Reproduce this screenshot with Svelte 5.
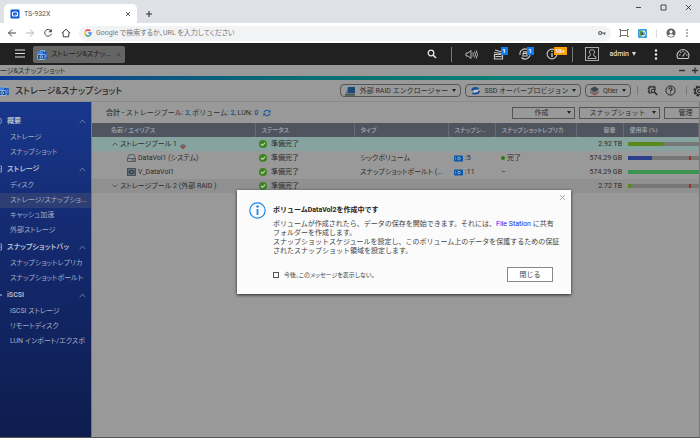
<script>
  const menu = [
    { title: '概要', items: ['ストレージ', 'スナップショット'] },
    { title: 'ストレージ', items: ['ディスク', 'ストレージ/スナップショ...', 'キャッシュ加速', '外部ストレージ'] },
    { title: 'スナップショットバッ', items: ['スナップショットレプリカ', 'スナップショットボールト'] },
    { title: 'iSCSI', items: ['iSCSI ストレージ', 'リモートディスク', 'LUN インポート/エクスポ'] }
  ];
  const selected = 'ストレージ/スナップショ...';
  const rows = [
    { kind: 'pool', open: true, name: 'ストレージプール 1', type: '', snap: '', replica: '', size: '2.92 TB', used: 50, color: '#588a1b', mark: false },
    { kind: 'disk', name: 'DataVol1 (システム)', type: 'シックボリューム', snap: ':5', replica: '完了', size: '574.29 GB', used: 34, color: '#2c3f8c', mark: true },
    { kind: 'vault', name: 'V_DataVol1', type: 'スナップショットボールト (...', snap: ':11', replica: '–', size: '574.29 GB', used: 100, color: '#3c9450', mark: false },
    { kind: 'pool', open: false, name: 'ストレージプール 2 (外部 RAID )', type: '', snap: '', replica: '', size: '2.72 TB', used: 4, color: '#588a1b', mark: true }
  ];
</script>

{#snippet storage()}
  <svg width="11" height="11" viewBox="0 0 11 11" aria-hidden="true">
    <path d="M3.500 4V1.500h4V4" fill="none" stroke="#7fa8e0" />
    <rect x="4" y="3" width="7" height="7" rx="1" fill="#2457b8" />
    <path d="M8.500 5h2M8.500 7h2" stroke="#8fb4ee" stroke-width=".7" />
    <rect x="0" y="2.500" width="6" height="3.500" fill="#3f86e4" />
    <rect x=".5" y="5.500" width="7.500" height="5" rx="1" fill="#164b8f" stroke="#a9c6ec" stroke-width=".8" />
    <circle cx="4.300" cy="8" r="1.300" fill="none" stroke="#c5daf4" stroke-width=".8" />
  </svg>
{/snippet}

<div class="page">
  <header class="tabs">
    <div class="tab">
      <svg width="10" height="10" viewBox="0 0 10 10" aria-hidden="true"><rect x=".5" y=".5" width="9" height="9" rx="1.2" fill="#0a5bd8" /><rect x="2.5" y="3" width="5" height="4" rx="1" fill="none" stroke="#fff" stroke-width="1.2" /><path d="M5.5 5.5l1.5 1.7" stroke="#fff" /></svg>
      <span>TS-932X</span>
      <button class="bare" aria-label="タブを閉じる"><svg width="6" height="6" viewBox="0 0 6 6"><path d="M1 1l4 4M5 1L1 5" stroke="#444" stroke-width=".9" /></svg></button>
    </div>
    <button class="bare plus" aria-label="新しいタブ"><svg width="8" height="8" viewBox="0 0 8 8"><path d="M4 1v6M1 4h6" stroke="#333" stroke-width="1.1" /></svg></button>
    <div class="winbtns">
      <button class="bare" aria-label="最小化"><svg width="7" height="7" viewBox="0 0 7 7"><path d="M1 3.5h5" stroke="#222" stroke-width=".8" /></svg></button>
      <button class="bare" aria-label="最大化"><svg width="7" height="7" viewBox="0 0 7 7"><path d="M1 1h5v5H1z" fill="none" stroke="#222" stroke-width=".8" /></svg></button>
      <button class="bare" aria-label="閉じる"><svg width="7" height="7" viewBox="0 0 7 7"><path d="M1 1l5 5M6 1L1 6" stroke="#222" stroke-width=".8" /></svg></button>
    </div>
  </header>

  <div class="toolbar">
    <button class="bare" aria-label="戻る"><svg width="10" height="10" viewBox="0 0 10 10"><path d="M9 5H1.5M5 1.5L1.5 5 5 8.5" fill="none" stroke="#444" /></svg></button>
    <button class="bare" aria-label="進む"><svg width="10" height="10" viewBox="0 0 10 10"><path d="M1 5h7.5M5 1.5L8.500 5 5 8.500" fill="none" stroke="#b4b6b8" /></svg></button>
    <button class="bare" aria-label="再読み込み"><svg width="10" height="10" viewBox="0 0 10 10"><path d="M8 3A3.400 3.400 0 1 0 8.400 5.800" fill="none" stroke="#444" /><path d="M8.800.8v3.400H5.400z" fill="#444" /></svg></button>
    <button class="bare" aria-label="ホーム"><svg width="10" height="10" viewBox="0 0 10 10"><path d="M.8 5.200L5 1.200l4.200 4M2.200 4.500V8.800h5.600V4.500" fill="none" stroke="#444" /></svg></button>
    <label class="omni">
      <svg width="8" height="8" viewBox="0 0 8 8" aria-hidden="true"><g fill="none" stroke-width="1.400"><path d="M6.200 2A3 3 0 0 0 1.400 2.500" stroke="#ea4335" /><path d="M1.400 2.500a3 3 0 0 0 0 3" stroke="#fbbc05" /><path d="M1.400 5.500A3 3 0 0 0 6 6.300" stroke="#34a853" /><path d="M6 6.300A3 3 0 0 0 7 4H4.200" stroke="#4285f4" /></g></svg>
      <input type="text" aria-label="アドレス" placeholder="Google で検索するか、URL を入力してください" />
      <svg width="8" height="6" viewBox="0 0 8 6" aria-hidden="true"><circle cx="2.200" cy="3" r="1.500" fill="none" stroke="#555" stroke-width="1.100" /><path d="M3.700 3h4M6.500 3v1.700" stroke="#555" stroke-width="1.200" /></svg>
    </label>
    <div class="ext">
      <svg width="10" height="8" viewBox="0 0 10 8" aria-hidden="true"><rect x="1.500" y="1.500" width="7" height="5" fill="none" stroke="#555" stroke-width=".8" /><path d="M0 .5h2M8 .5h2M0 7.500h2M8 7.500h2" stroke="#4a9c4a" /></svg>
      <svg width="9" height="9" viewBox="0 0 9 9" aria-hidden="true"><rect width="9" height="9" rx="1" fill="#3aa0e0" /><circle cx="4.500" cy="4.500" r="3.200" fill="#d9e8d0" /><path d="M4.500 1.300A3.200 3.200 0 0 0 3.500 7.500l1-3z" fill="#4c9d3c" /><circle cx="5" cy="4.500" r="1.600" fill="#244f80" /><circle cx="5.500" cy="4" r=".6" fill="#fff" /></svg>
      <i></i>
      <svg width="10" height="10" viewBox="0 0 10 10" aria-hidden="true"><circle cx="5" cy="5" r="4.500" fill="#5f6368" /><circle cx="5" cy="3.800" r="1.600" fill="#fff" /><path d="M2 7.500c1-1.800 5-1.800 6 0-1.600 1.600-4.400 1.600-6 0z" fill="#fff" /></svg>
      <svg width="4" height="10" viewBox="0 0 4 10" aria-hidden="true"><g fill="#555"><circle cx="2" cy="2" r=".8" /><circle cx="2" cy="5" r=".8" /><circle cx="2" cy="8" r=".8" /></g></svg>
    </div>
  </div>

  <nav class="desk" aria-label="デスクトップ">
    <button class="bare burger" aria-label="メニュー"><svg width="10" height="9" viewBox="0 0 10 9"><path d="M0 1h10M0 4.500h10M0 8h10" stroke="#ddd" stroke-width="1.200" /></svg></button>
    <div class="task">{@render storage()}<span>ストレージ&amp;スナッ...</span>
      <svg width="5" height="5" viewBox="0 0 5 5" aria-hidden="true"><path d="M.7.700l3.600 3.600M4.300.7L.7 4.300" stroke="#244a70" stroke-width=".9" /></svg>
    </div>
    <div class="tray">
      <button class="bare search" aria-label="検索"><svg width="10" height="10" viewBox="0 0 10 10"><circle cx="4" cy="4" r="2.800" fill="none" stroke="#e4e4e4" stroke-width="1.300" /><path d="M6 6l3 3" stroke="#e4e4e4" stroke-width="1.600" /></svg></button>
      <i></i>
      <button class="bare" aria-label="音量"><svg width="13" height="11" viewBox="0 0 13 11"><path d="M1 4h2l3-2.500v8L3 7H1zM7.700 3.500q1.300 2 0 4M9.500 2.500q2 3 0 6M11.200 1.500q2.600 4 0 8" fill="none" stroke="#c8c8c8" stroke-width=".9" /></svg></button>
      <button class="bare note" aria-label="バックグラウンドタスク 1"><svg width="11" height="12" viewBox="0 0 11 12"><path d="M1.500 11V6.500h8V11zM1 4.500l7 1M2 2l7 2M2.500 8.500h6" fill="none" stroke="#c8c8c8" stroke-width="1.200" /></svg><b>1</b></button>
      <button class="bare note" aria-label="外部デバイス 1"><svg width="12" height="12" viewBox="0 0 12 12"><path d="M1 7A5 5 0 0 1 9.500 2.500M11 5A5 5 0 0 1 2.500 9.500M4 5.500h4V8H4zM4.700 5.500V3.800h2.600v1.700" fill="none" stroke="#c8c8c8" stroke-width="1.100" /></svg><b>1</b></button>
      <button class="bare note wide" aria-label="通知 10+"><svg width="12" height="12" viewBox="0 0 12 12"><circle cx="6" cy="6" r="4.900" fill="none" stroke="#c8c8c8" stroke-width="1.100" /><path d="M6 5v4M6 2.700v1.300" stroke="#ddd" stroke-width="1.200" /></svg><b>10+</b></button>
      <i></i>
      <svg class="avatar" width="14" height="14" viewBox="0 0 14 14" aria-hidden="true"><rect x=".5" y=".5" width="13" height="13" fill="none" stroke="#aaa" /><path d="M3 11.500V10l2.500-1.500V7.500Q4.500 6.500 4.500 5 4.500 2.500 7 2.500T9.500 5Q9.500 6.500 8.500 7.500v1L11 10v1.500z" fill="none" stroke="#bbb" stroke-width=".9" /></svg>
      <button class="bare admin">admin <svg width="4" height="4" viewBox="0 0 4 4"><path d="M0 0h4L2 4z" fill="#ddd" /></svg></button>
      <button class="bare dots" aria-label="その他"><svg width="4" height="11" viewBox="0 0 4 11"><g fill="#eee"><circle cx="2" cy="1.500" r="1.200" /><circle cx="2" cy="5.500" r="1.200" /><circle cx="2" cy="9.500" r="1.200" /></g></svg></button>
      <button class="bare" aria-label="ダッシュボード"><svg width="14" height="12" viewBox="0 0 14 12"><path d="M2 10.500a5.800 5.800 0 1 1 10 0zM6.500 8.500L9.500 4.500M3 7h1.500M4.200 3.800l1 1M7 2.500V4M10 7h1.500M4.500 10.500h5" fill="none" stroke="#c8c8c8" stroke-width="1.100" /></svg></button>
    </div>
  </nav>

  <div class="wintitle"><span>ストレージ&amp;スナップショット</span>
    <svg width="22" height="7" viewBox="0 0 22 7" aria-hidden="true"><path d="M1 3.500h6M14 3.500h6M17 .5v6" stroke="#333" stroke-width="1.300" /></svg>
  </div>
  <div class="stripe"></div>

  <div class="apphead">
    {@render storage()}
    <h1>ストレージ&amp;スナップショット</h1>
    <button class="pill raid"><svg width="11" height="10" viewBox="0 0 11 10"><path d="M3 1h7v6H2z" fill="#174a78" /><path d="M2 4L0 9h10V7H3z" fill="#6d757d" /><path d="M0 9h10" stroke="#1f3a2a" /></svg><span>外部 RAID エンクロージャー</span><em></em></button>
    <button class="pill ssd"><svg width="11" height="10" viewBox="0 0 11 10"><path d="M1 4q2-5 8-2L8 4Q4 3 3 5zM10 5Q9 10 2 8l1-2q4 1.500 5-1z" fill="#14519b" /><path d="M3 4.500l5-1v2L4 7z" fill="#c4c8cc" /></svg><span>SSD オーバープロビジョン</span><em></em></button>
    <button class="pill qtier"><svg width="9" height="10" viewBox="0 0 9 10"><path d="M0 6.500L4.500 4 9 6.500 4.500 9.500z" fill="#a5301f" /><path d="M0 4.500L4.500 2 9 4.500v1.500L4.500 8.500 0 6z" fill="#74777b" /><path d="M0 3L4.500.5 9 3 4.500 6z" fill="#3e444b" /></svg><span>Qtier</span><em></em></button>
    <i></i>
    <button class="bare t1" aria-label="診断"><svg width="11" height="11" viewBox="0 0 11 11"><path d="M8 5.500V2H2v6h3M2 3.500H.8M2 6.500H.8M3.500 2V.8M6.500 2V.8" fill="none" stroke="#222" stroke-width="1.100" /><circle cx="6" cy="5.800" r="1.700" fill="none" stroke="#222" /><path d="M7.200 7l3 3" stroke="#222" stroke-width="1.500" /></svg></button>
    <button class="bare t2" aria-label="ヘルプ"><svg width="11" height="11" viewBox="0 0 11 11"><circle cx="5.500" cy="5.500" r="4.600" fill="none" stroke="#222" /><path d="M4 4.300Q4 2.800 5.500 2.800T7 4.300Q7 5 5.500 5.800v.7M5.500 7.500v1.100" fill="none" stroke="#222" stroke-width="1.100" /></svg></button>
    <i class="second"></i>
    <button class="bare gear" aria-label="設定"><svg width="12" height="12" viewBox="0 0 12 12"><circle cx="6" cy="6" r="4.600" fill="none" stroke="#222" stroke-width="1.800" stroke-dasharray="2.400 1.200" /><circle cx="6" cy="6" r="3.600" fill="#999" stroke="#222" /><circle cx="6" cy="6" r="1.500" fill="none" stroke="#222" /></svg></button>
  </div>

  <div class="body">
    <aside>
      {#each menu as group, g}
        <section>
          <h2>
            <svg class="gicon" width="8" height="8" viewBox="0 0 8 8" aria-hidden="true">
              {#if g === 0}<circle cx="4" cy="4" r="3.500" fill="none" stroke="#8795b5" />{:else if g === 3}<path d="M2 4h6" stroke="#8795b5" stroke-width="1.500" />{:else}<path d="M1 1h6.500v6H1zM4 4h3" fill="none" stroke="#8795b5" />{/if}
            </svg>
            <span>{group.title}</span>
            <svg width="7" height="5" viewBox="0 0 7 5" aria-hidden="true"><path d="M.7 4.200L3.500 1l2.800 3.200" fill="none" stroke="#7c8cb6" stroke-width=".8" /></svg>
          </h2>
          {#each group.items as item}
            <a href="#top" class:sel={item === selected}>{item}</a>
          {/each}
        </section>
      {/each}
    </aside>

    <main>
      <div class="summary">
        <p><strong>合計 -</strong> ストレージプール: <b>2</b>, ボリューム: <b>2</b>, LUN: <b>0</b></p>
        <button class="bare" aria-label="更新"><svg width="8" height="8" viewBox="0 0 8 8"><path d="M1 3.500Q1.500 1.300 4 1.300q1.500 0 2.500 1.200M7 4.500Q6.500 6.700 4 6.700q-1.500 0-2.500-1.200" fill="none" stroke="#155a9e" stroke-width="1.100" /><path d="M7.600.7v2.800H4.800zM.4 7.300V4.500h2.800z" fill="#155a9e" /></svg></button>
        <div class="actions">
          <button class="act make"><span>作成</span><em></em></button>
          <button class="act snapb"><span>スナップショット</span><em></em></button>
          <button class="act manage"><span>管理</span></button>
        </div>
      </div>
      <table>
        <colgroup><col class="c1" /><col class="c2" /><col class="c3" /><col class="c4" /><col class="c5" /><col class="c6" /><col /></colgroup>
        <thead>
          <tr><th class="first">名前 / エイリアス</th><th>ステータス</th><th>タイプ</th><th>スナップシ...</th><th>スナップショットレプリカ</th><th class="num">容量</th><th>使用率 (%)</th></tr>
        </thead>
        <tbody>
          {#each rows as r}
            <tr class:open={r.open} class:shut={r.kind === 'pool' && !r.open}>
              <td>
                <div class="name {r.kind}">
                  {#if r.kind === 'pool'}
                    <svg width="6" height="4" viewBox="0 0 6 4" aria-hidden="true"><path d={r.open ? 'M.5 3.500L3 1l2.500 2.500' : 'M.5.500L3 3 5.500.500'} fill="none" stroke="#444" stroke-width=".8" /></svg>
                  {:else if r.kind === 'disk'}
                    <svg width="9" height="8" viewBox="0 0 9 8" aria-hidden="true"><path d="M.5 4.500L2 .7h5l1.500 3.800v3h-8zM.5 4.500h8" fill="none" stroke="#444c55" stroke-width=".8" /><path d="M4.500 6h3" stroke="#444c55" /></svg>
                  {:else}
                    <svg width="9" height="8" viewBox="0 0 9 8" aria-hidden="true"><rect x=".5" y=".5" width="8" height="7" fill="#6d7781" stroke="#39424c" stroke-width=".8" /><circle cx="4.500" cy="4" r="1.800" fill="none" stroke="#222b38" /><path d="M2 2v4M7 2v4" stroke="#2c3643" stroke-width=".7" /></svg>
                  {/if}
                  <span>{r.name}</span>
                  {#if r.open}<svg class="tier" width="6" height="6" viewBox="0 0 6 6" aria-hidden="true"><path d="M0 3.500L3 2l3 1.500L3 6z" fill="#a5301f" /><path d="M0 2.500L3 .7l3 1.800L3 4.500z" fill="#6c7075" /></svg>{/if}
                </div>
              </td>
              <td><div class="cell status"><svg width="8" height="8" viewBox="0 0 8 8" aria-hidden="true"><circle cx="4" cy="4" r="4" fill="#3c8420" /><path d="M2 4l1.500 1.500L6.200 2.700" fill="none" stroke="#c5d2bd" stroke-width="1.100" /></svg><span>準備完了</span></div></td>
              <td>{r.type}</td>
              <td>{#if r.snap}<div class="cell snap"><svg width="9" height="7" viewBox="0 0 9 7" aria-hidden="true"><rect y=".5" width="9" height="6" rx=".8" fill="#0c58a8" /><circle cx="5" cy="3.500" r="1.300" fill="none" stroke="#a9bed4" stroke-width=".8" /><path d="M1.500 2v3" stroke="#7f9fc4" stroke-width=".6" /></svg><span>{r.snap}</span></div>{/if}</td>
              <td>{#if r.replica === '完了'}<span class="ok"></span>{/if}{r.replica}</td>
              <td class="num">{r.size}</td>
              <td><div class="bar"><div style:width="{r.used}%" style:background={r.color}></div>{#if r.mark}<s></s>{/if}</div></td>
            </tr>
          {/each}
        </tbody>
      </table>
    </main>
  </div>

  <div class="dialog" role="dialog" aria-labelledby="dlg-title">
    <button class="bare close" aria-label="閉じる"><svg width="7" height="7" viewBox="0 0 7 7"><path d="M1 1l5 5M6 1L1 6" stroke="#999" stroke-width=".8" /></svg></button>
    <svg class="info" width="17" height="17" viewBox="0 0 17 17" aria-hidden="true"><circle cx="8.500" cy="8.500" r="7.700" fill="none" stroke="#1688e8" stroke-width="1.200" /><path d="M8.500 7v6" stroke="#1688e8" stroke-width="1.800" /><circle cx="8.500" cy="4.500" r="1.200" fill="#1688e8" /></svg>
    <div class="content">
      <h3 id="dlg-title">ボリュームDataVol2を作成中です</h3>
      <p>ボリュームが作成されたら、データの保存を開始できます。それには、<a href="#top">File Station</a> に共有<br />フォルダーを作成します。<br />スナップショットスケジュールを設定し、このボリューム上のデータを保護するための保証<br />されたスナップショット領域を設定します。</p>
      <div class="foot">
        <label><input type="checkbox" /><span>今後、このメッセージを表示しない。</span></label>
        <button>閉じる</button>
      </div>
    </div>
  </div>
</div>

<style>
  :global(body) { margin: 0; }
  .page, .page * { box-sizing: border-box; }
  .page {
    position: relative;
    display: flex;
    flex-direction: column;
    min-height: 100vh;
    overflow: hidden;
    background: #999;
    color: #2c2c2c;
    font: 7px/10px Roboto, "Noto Sans CJK JP", sans-serif;
    font-feature-settings: "palt";
    white-space: nowrap;
  }
  svg { display: block; flex: none; }
  button, input { font: inherit; font-feature-settings: inherit; color: inherit; margin: 0; }
  h1, h2, h3, p { margin: 0; }
  a { text-decoration: none; }
  .bare { display: flex; align-items: center; flex: none; padding: 0; border: 0; background: none; }

  .tabs { display: flex; align-items: center; height: 23px; padding: 0 8px 0 4px; background: #dee1e6; }
  .tab { display: flex; align-items: center; align-self: flex-end; width: 133px; height: 19px; padding: 0 6px; border-radius: 5px 5px 0 0; background: #fff; color: #555; }
  .tab span { flex: 1; padding-left: 4px; }
  .plus { margin: 4px 0 0 8px; }
  .winbtns { display: flex; gap: 18px; margin: -8px 0 0 auto; }

  .toolbar { display: flex; align-items: center; gap: 8px; height: 20px; padding: 0 11px 0 7px; background: #fff; }
  .omni { display: flex; flex: 1; align-items: center; height: 15px; padding: 0 5px; border-radius: 8px; background: #f1f3f4; }
  .omni input { flex: 1; min-width: 0; padding: 0 4px; border: 0; outline: 0; background: none; }
  .omni input::placeholder { color: #777; opacity: 1; }
  .ext { display: flex; align-items: center; gap: 9px; }
  .ext i { width: 1px; height: 9px; background: #ddd; }

  .desk { display: flex; align-items: center; height: 22px; padding-right: 10px; background: #212121; color: #ddd; }
  .burger { align-self: stretch; padding: 0 8px 2px 15px; }
  .task { display: flex; align-items: center; width: 92px; height: 17px; padding: 0 4px; border-radius: 2px; background: #656565; color: #1b1b1b; }
  .task span { flex: 1; margin-left: 3px; }
  .tray { display: flex; align-items: center; margin-left: auto; }
  .tray > i { align-self: flex-end; width: 1px; height: 15px; background: #777; }
  .search { margin-right: 14px; }
  .tray i + button { margin-left: 13px; }
  .note { position: relative; margin-left: 15px; }
  .note b { position: absolute; top: -1px; left: 8px; width: 7px; background: #0a7cf0; color: #fff; font-size: 6px; line-height: 8px; text-align: center; }
  .wide { margin-right: 14px; }
  .wide b { width: 13px; background: #f5a000; }
  .avatar { margin-left: 12px; }
  .admin { gap: 3px; margin-left: 11px; font-weight: 500; }
  .dots { margin: 0 18px; }

  .wintitle { display: flex; align-items: center; height: 11px; }
  .wintitle span { flex: 1; margin-left: -18px; }
  .stripe { height: 4px; background: linear-gradient(90deg, #103a97, #0a6b72 40%, #087f73 70%, #00818e); }

  .apphead { display: flex; align-items: center; height: 22px; border-bottom: 1px solid #8a8a8a; }
  .apphead > :global(svg) { margin-left: -2px; }
  h1 { flex: 1; padding-left: 6px; font-size: 9px; font-weight: 500; line-height: 12px; }
  .pill { display: flex; align-items: center; gap: 3px; height: 13px; margin-right: 4px; padding: 0 4px; border: 1px solid #555; border-radius: 4px; background: none; font-feature-settings: normal; }
  .pill span, .act span { flex: 1; }
  .raid { width: 121px; }
  .ssd { width: 116px; }
  .qtier { width: 46px; margin-right: 6px; }
  em { width: 0; border: 2px solid transparent; border-top: 3px solid #222; border-bottom: 0; }
  .apphead i { width: 1px; height: 9px; background: #777; }
  .t1 { margin: 0 7px 0 9px; }
  .second { margin: 0 6px 0 10px; }
  .gear { margin-right: -5px; }

  .body { display: flex; flex: 1; border-right: 1px solid #777; border-bottom: 1px solid #555; }
  aside { width: 92px; padding-top: 10px; overflow: hidden; border-right: 1px solid #777; background: linear-gradient(#18378c, #142a70 40%, #0e1d4e); color: #a5adc2; }
  h2 { display: flex; align-items: center; height: 18px; padding-right: 5px; font-size: 7px; font-weight: 700; }
  .gicon { margin-left: -6px; }
  h2 span { flex: 1; padding-left: 5px; color: #b4bbca; }
  aside a { display: block; height: 15px; padding-left: 10px; color: inherit; line-height: 15px; }
  aside a.sel { background: #2c3e74; }

  main { flex: 1; min-width: 0; }
  .summary { display: flex; align-items: center; height: 21px; padding-left: 14px; overflow: hidden; font-feature-settings: normal; }
  .summary p b { color: #124f8c; font-weight: 500; }
  .summary strong { font-weight: 500; }
  .summary > button { margin-left: 5px; }
  .actions { display: flex; gap: 4px; margin: 0 -8px 0 auto; }
  .act { display: flex; align-items: center; height: 12px; padding: 0 3px; border: 1px solid #555; background: none; text-align: center; }
  .make { width: 63px; }
  .snapb { width: 81px; }
  .manage { width: 43px; }

  table { width: 100%; border-collapse: collapse; table-layout: fixed; }
  .c1 { width: 163px; }
  .c2 { width: 99px; }
  .c3 { width: 94px; }
  .c4 { width: 47px; }
  .c5 { width: 81px; }
  .c6 { width: 47px; }
  th { height: 14px; padding: 0 6px; border-right: 1px solid #666b75; background: #50545f; color: #a7a9ae; font-size: 6px; font-weight: 500; text-align: left; }
  th.first { padding-left: 19px; }
  td { height: 14px; padding: 0 6px; }
  td:last-child { padding: 0 0 0 5px; }
  th.num { padding-right: 7px; text-align: right; }
  td.num { padding-right: 1px; text-align: right; }
  tr.open { background: #86a39f; }
  tr.shut { background: #909090; }
  .name, .cell { display: flex; align-items: center; }
  .name { gap: 2px; padding-left: 29px; }
  .name.pool { padding-left: 14px; }
  .tier { margin: 3px 0 0 1px; }
  .status { gap: 4px; margin-left: -2px; }
  .snap { gap: 2px; }
  .ok { display: inline-block; width: 4px; height: 4px; margin-right: 2px; border-radius: 2px; background: #2d7a10; }
  .bar { position: relative; height: 4px; background: #777; }
  .bar div { height: 4px; }
  .bar s { position: absolute; top: 0; left: 86%; width: 2px; height: 4px; background: #a02c2c; }

  .dialog { position: absolute; top: 190px; left: 237px; display: flex; width: 334px; padding: 12px 10px; background: #fbfbfb; box-shadow: 0 1px 3px #222; color: #444; font-feature-settings: normal; }
  .info { margin-left: 2px; }
  .close { position: absolute; top: 4px; right: 5px; }
  .content { flex: 1; margin-left: 7px; }
  h3 { color: #222; font-size: 7px; font-weight: 700; line-height: 17px; }
  .dialog p { padding-top: 1px; line-height: 9px; }
  .dialog p a { color: #22e; }
  .foot { display: flex; align-items: center; justify-content: space-between; margin-top: 11px; padding-right: 8px; }
  .foot label { display: flex; align-items: center; gap: 5px; font-size: 6px; font-feature-settings: "palt"; }
  .foot input { appearance: none; width: 6px; height: 6px; border: 1px solid #555; }
  .foot button { width: 46px; height: 15px; padding: 0; border: 1px solid #888; background: #fff; }
</style>
